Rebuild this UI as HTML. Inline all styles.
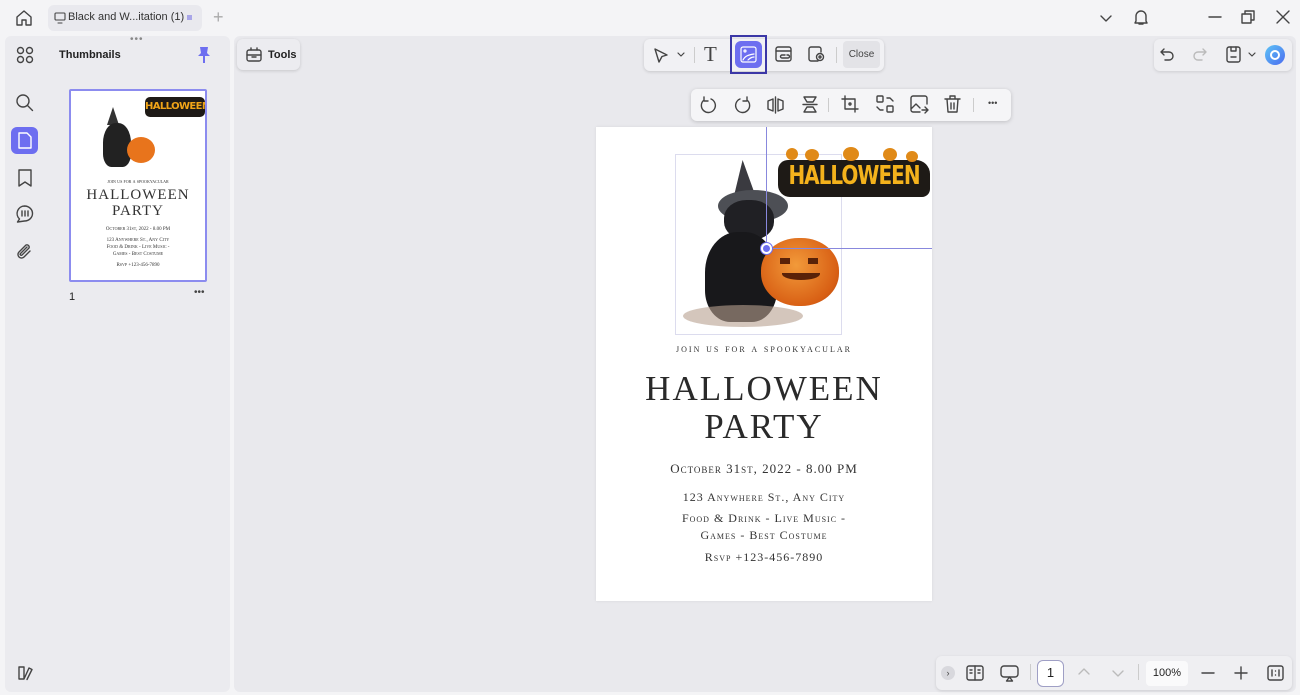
<!DOCTYPE html>
<html><head><meta charset="utf-8"><style>
*{box-sizing:border-box;margin:0;padding:0}
body{width:1300px;height:695px;overflow:hidden;background:#f4f4f6;font-family:"Liberation Sans",sans-serif;position:relative;color:#222}
.a{position:absolute}
svg{position:absolute}
.ic{fill:none;stroke:#444;stroke-width:1.4;stroke-linecap:round;stroke-linejoin:round}
.serif{font-family:"Liberation Serif",serif;font-variant:small-caps;text-align:center;color:#333;position:absolute;white-space:nowrap}
</style></head><body>
<svg class="ic" style="left:14px;top:8px" width="20" height="20" viewBox="0 0 20 20"><path d="M3 9l7-6 7 6v8h-5v-5H8v5H3z"/></svg>
<div class="a" style="left:48px;top:5px;width:154px;height:26px;background:#e9e9ee;border-radius:6px"></div>
<svg class="ic" style="left:54px;top:12px;stroke-width:1.1" width="12" height="12" viewBox="0 0 12 12"><rect x="1" y="1" width="10" height="7" rx="1"/><path d="M4 11h4"/></svg>
<div class="a" style="left:68px;top:11px;font-size:11px;color:#333">Black and W...itation (1)</div>
<div class="a" style="left:187px;top:15px;width:5px;height:5px;background:#a9a6e8"></div>
<div class="a" style="left:213px;top:7px;font-size:18px;color:#aaa;font-weight:300">+</div>
<svg class="ic" style="left:1100px;top:12px" width="12" height="12"><path d="M1 4l5 5 5-5"/></svg>
<svg class="ic" style="left:1133px;top:9px" width="16" height="17"><path d="M3 12V7a5 5 0 0110 0v5l1 2H2zM6 15h4"/></svg>
<svg class="ic" style="left:1208px;top:10px" width="14" height="14"><path d="M1 7h12"/></svg>
<svg class="ic" style="left:1241px;top:10px" width="14" height="14"><rect x="1" y="4" width="9" height="9"/><path d="M4 4V1h9v9h-3"/></svg>
<svg class="ic" style="left:1276px;top:10px" width="14" height="14"><path d="M1 1l12 12M13 1L1 13"/></svg>
<div class="a" style="left:5px;top:36px;width:225px;height:656px;background:#ebebef;border-radius:6px"></div>
<svg class="ic" style="left:16px;top:46px" width="18" height="18"><circle cx="4.5" cy="4.5" r="3"/><circle cx="13.5" cy="4.5" r="3"/><circle cx="4.5" cy="13.5" r="3"/><circle cx="13.5" cy="13.5" r="3"/></svg>
<svg class="ic" style="left:15px;top:93px" width="19" height="19"><circle cx="8" cy="8" r="6"/><path d="M12.5 12.5l5 5"/></svg>
<div class="a" style="left:11px;top:127px;width:27px;height:27px;background:#6d6ef0;border-radius:6px"></div>
<svg class="ic" style="left:17px;top:132px;stroke:#fff" width="16" height="17"><path d="M2 1h8l4 4v11H2z"/></svg>
<svg class="ic" style="left:17px;top:169px" width="16" height="18"><path d="M2 1h12v16l-6-4-6 4z"/></svg>
<svg class="ic" style="left:15px;top:205px" width="19" height="18"><path d="M9.5 1a8 7.5 0 110 15l-7 1 2-3a7.5 7.5 0 015-13zM7 6v5M10 6v5M13 6v5"/></svg>
<svg class="ic" style="left:16px;top:242px" width="17" height="19"><path d="M14 9l-6 6a3.5 3.5 0 01-5-5l7-7a2.3 2.3 0 013 3l-7 7a1 1 0 01-1.5-1.5L11 5"/></svg>
<svg class="ic" style="left:17px;top:665px" width="16" height="16"><path d="M2 2h5v12H2zM7 14l5-11 3 1.5-5 10"/></svg>
<div class="a" style="left:130px;top:34px;font-size:10px;color:#888;letter-spacing:1px">•••</div>
<div class="a" style="left:59px;top:49px;font-size:11px;font-weight:bold;color:#222">Thumbnails</div>
<svg style="left:197px;top:46px" width="14" height="18"><path d="M3 1h8l-1 6 3 3H1l3-3z" fill="#6d6ef0"/><path d="M7 10v7" stroke="#6d6ef0" stroke-width="2"/></svg>
<div class="a" style="left:69px;top:89px;width:138px;height:193px;background:#fff;border:2px solid #8c8cef;border-radius:2px;overflow:hidden">
 <div class="a" style="left:74px;top:6px;width:60px;height:20px;background:#1e1a16;border-radius:5px;font-family:'DejaVu Sans',sans-serif;font-size:10px;font-weight:bold;color:#f0a418;text-align:center;line-height:20px;letter-spacing:-.6px">HALLOWEEN</div>
 <div class="a" style="left:36px;top:16px;width:12px;height:18px;background:#333;clip-path:polygon(50% 0,100% 100%,0 100%)"></div>
 <div class="a" style="left:32px;top:32px;width:28px;height:44px;background:#222;border-radius:45% 45% 30% 30%"></div>
 <div class="a" style="left:56px;top:46px;width:28px;height:26px;background:#e8741c;border-radius:50%"></div>
 <div class="serif" style="left:0;width:134px;top:88px;font-size:5px">join us for a spookyacular</div>
 <div class="serif" style="left:0;width:134px;top:96px;font-size:15px;line-height:16px;letter-spacing:1px">HALLOWEEN<br>PARTY</div>
 <div class="serif" style="left:0;width:134px;top:135px;font-size:5px">October 31st, 2022 - 8.00 PM</div>
 <div class="serif" style="left:0;width:134px;top:146px;font-size:5px;line-height:7px">123 Anywhere St., Any City<br>Food &amp; Drink - Live Music -<br>Games - Best Costume</div>
 <div class="serif" style="left:0;width:134px;top:171px;font-size:5px">Rsvp +123-456-7890</div>
</div>
<div class="a" style="left:69px;top:291px;font-size:11px">1</div>
<div class="a" style="left:194px;top:287px;font-size:10px;color:#444">•••</div>
<div class="a" style="left:234px;top:36px;width:1062px;height:656px;background:#e9e9ed;border-radius:6px"></div>
<div class="a" style="left:237px;top:39px;width:63px;height:31px;background:#ececf0;border-radius:6px;box-shadow:0 1px 3px rgba(0,0,0,.15)"></div>
<svg class="ic" style="left:245px;top:45px" width="18" height="18"><rect x="2" y="5" width="14" height="11" rx="2"/><path d="M6 5V3M12 5V3M2 10h14M7 12h4"/></svg>
<div class="a" style="left:268px;top:49px;font-size:11px;font-weight:bold">Tools</div>
<div class="a" style="left:644px;top:39px;width:240px;height:32px;background:#f1f1f4;border-radius:6px;box-shadow:0 1px 3px rgba(0,0,0,.15)"></div>
<svg class="ic" style="left:653px;top:47px" width="16" height="17"><path d="M2 2l12 6-5 1.5L6 15z"/></svg>
<svg class="ic" style="left:677px;top:52px;stroke-width:1.2" width="8" height="6"><path d="M1 1l3 3 3-3"/></svg>
<div class="a" style="left:694px;top:47px;width:1px;height:16px;background:#ccc"></div>
<div class="a" style="left:704px;top:42px;font-family:'Liberation Serif',serif;font-size:21px;color:#444">T</div>
<div class="a" style="left:730px;top:35px;width:37px;height:39px;border:2px solid #3b37a6"></div>
<div class="a" style="left:735px;top:41px;width:27px;height:27px;background:#6d6ef0;border-radius:6px"></div>
<svg class="ic" style="left:740px;top:46px;stroke:#fff;stroke-width:1.2" width="17" height="17"><rect x="1" y="1" width="15" height="15" rx="2"/><circle cx="5" cy="5" r="1"/><path d="M3 14c2-4 5-5 11-6M8 14c2-2 4-3 6-3"/></svg>
<svg class="ic" style="left:775px;top:46px" width="18" height="17"><rect x="1" y="1" width="15" height="14" rx="2"/><path d="M1 5h15M7 12h6a1.5 1.5 0 000-3h-1M10 9H7a1.5 1.5 0 000 3"/></svg>
<svg class="ic" style="left:808px;top:46px" width="18" height="17"><path d="M10 15H3a2 2 0 01-2-2V3a2 2 0 012-2h8a2 2 0 012 2v3"/><circle cx="12" cy="11" r="3.5"/><circle cx="12" cy="11" r="1"/></svg>
<div class="a" style="left:836px;top:47px;width:1px;height:16px;background:#ccc"></div>
<div class="a" style="left:843px;top:41px;width:37px;height:27px;background:#e3e3e7;border-radius:4px;font-size:10px;color:#444;text-align:center;line-height:27px">Close</div>
<div class="a" style="left:691px;top:89px;width:320px;height:32px;background:#f5f5f7;border-radius:6px;box-shadow:0 1px 4px rgba(0,0,0,.18)"></div>
<svg class="ic" style="left:699px;top:96px" width="18" height="18"><path d="M5 4a7 7 0 107-1M5 1v4h4"/></svg>
<svg class="ic" style="left:734px;top:96px" width="18" height="18"><path d="M13 4a7 7 0 11-7-1M13 1v4H9"/></svg>
<svg class="ic" style="left:766px;top:96px" width="19" height="18"><path d="M9.5 1v16M7 3L2 5v8l5 2zM12 3l5 2v8l-5 2z"/></svg>
<svg class="ic" style="left:801px;top:95px" width="18" height="19"><path d="M2 9.5h14M3 2h12l-3 5H6zM6 12h6l3 5H3z"/></svg>
<div class="a" style="left:828px;top:98px;width:1px;height:14px;background:#ccc"></div>
<svg class="ic" style="left:841px;top:95px" width="19" height="19"><path d="M4 1v13h13M1 4h13v13"/><circle cx="9" cy="9" r="1"/></svg>
<svg class="ic" style="left:876px;top:95px" width="18" height="19"><rect x="1" y="1" width="6" height="6" rx="1"/><rect x="11" y="11" width="6" height="6" rx="1"/><path d="M11 3h3l3 3M7 15H4l-3-3"/></svg>
<svg class="ic" style="left:910px;top:95px" width="19" height="19"><path d="M10 17H3a2 2 0 01-2-2V3a2 2 0 012-2h12a2 2 0 012 2v6M1 14l5-5 4 4M12 15h6M15 12l3 3-3 3"/></svg>
<svg class="ic" style="left:944px;top:95px" width="17" height="19"><path d="M1 4h15M6 4V1h5v3M3 4l1 13h9l1-13M7 8v6M10 8v6"/></svg>
<div class="a" style="left:973px;top:98px;width:1px;height:14px;background:#ccc"></div>
<div class="a" style="left:988px;top:98px;font-size:9px;color:#444">•••</div>
<div class="a" style="left:1154px;top:39px;width:138px;height:32px;background:#efeff2;border-radius:6px;box-shadow:0 1px 3px rgba(0,0,0,.12)"></div>
<svg class="ic" style="left:1160px;top:48px" width="15" height="13"><path d="M4 1L1 4l3 3M1 4h8a4 4 0 010 8H5"/></svg>
<svg class="ic" style="left:1192px;top:48px;stroke:#bbb" width="15" height="13"><path d="M11 1l3 3-3 3M14 4H6a4 4 0 000 8h4"/></svg>
<svg class="ic" style="left:1226px;top:46px" width="15" height="17"><rect x="1" y="1" width="13" height="15" rx="2"/><path d="M5 1v4h5V1M5 11h5"/></svg>
<svg class="ic" style="left:1248px;top:52px;stroke-width:1.2" width="8" height="6"><path d="M1 1l3 3 3-3"/></svg>
<div class="a" style="left:1265px;top:45px;width:20px;height:20px;border-radius:50%;background:linear-gradient(135deg,#5cc3f5,#4c6cf0)"></div>
<div class="a" style="left:1270px;top:50px;width:10px;height:10px;border-radius:50%;border:2px solid #fff"></div>
<div class="a" style="left:596px;top:127px;width:336px;height:474px;background:#fff;box-shadow:0 0 3px rgba(0,0,0,.08)"></div>
<div class="a" style="left:675px;top:154px;width:167px;height:181px;border:1px solid #dcdcee"></div>
<div class="a" style="left:778px;top:160px;width:152px;height:37px;background:#1e1a16;border-radius:10px 14px 8px 12px"></div>
<div class="a" style="left:786px;top:148px;width:12px;height:12px;border-radius:50%;background:#e08a18"></div>
<div class="a" style="left:805px;top:149px;width:14px;height:12px;border-radius:50%;background:#e08a18"></div>
<div class="a" style="left:843px;top:147px;width:16px;height:14px;border-radius:50%;background:#e08a18"></div>
<div class="a" style="left:883px;top:148px;width:14px;height:13px;border-radius:50%;background:#e08a18"></div>
<div class="a" style="left:906px;top:151px;width:12px;height:11px;border-radius:50%;background:#e08a18"></div>
<div class="a" style="left:778px;top:163px;width:152px;font-family:'DejaVu Sans',sans-serif;font-weight:bold;font-size:20px;line-height:24px;letter-spacing:-1px;color:#f4b21c;text-align:center;transform:scaleY(1.3)">HALLOWEEN</div>
<div class="a" style="left:733px;top:160px;width:24px;height:40px;background:#3a3a40;clip-path:polygon(40% 0,100% 100%,0 100%)"></div>
<div class="a" style="left:718px;top:190px;width:70px;height:32px;background:#4d4f55;border-radius:50%"></div>
<div class="a" style="left:724px;top:200px;width:50px;height:40px;background:#202024;border-radius:45%"></div>
<div class="a" style="left:705px;top:232px;width:72px;height:90px;background:#18181b;border-radius:45% 45% 35% 35%"></div>
<div class="a" style="left:683px;top:305px;width:120px;height:22px;background:#b8a090;border-radius:50%;opacity:.6"></div>
<div class="a" style="left:761px;top:238px;width:78px;height:68px;background:radial-gradient(circle at 45% 40%,#f29a3a,#d85f14 70%,#a8400c);border-radius:48%"></div>
<div class="a" style="left:782px;top:268px;width:38px;height:12px;border-bottom:7px solid #5a2208;border-radius:0 0 50% 50%"></div>
<div class="a" style="left:780px;top:258px;width:10px;height:6px;background:#5a2208"></div>
<div class="a" style="left:808px;top:258px;width:10px;height:6px;background:#5a2208"></div>
<div class="a" style="left:766px;top:127px;width:1px;height:122px;background:#8888dd"></div>
<div class="a" style="left:767px;top:248px;width:165px;height:1px;background:#8888dd"></div>
<div class="a" style="left:761px;top:243px;width:11px;height:11px;border-radius:50%;background:#6d6ef0;border:2px solid #fff;box-shadow:0 0 0 1px #6d6ef0"></div>
<div class="serif" style="left:596px;width:336px;top:343px;font-size:11px;letter-spacing:2px">join us for a spookyacular</div>
<div class="serif" style="left:596px;width:336px;top:370px;font-size:35px;line-height:38px;letter-spacing:2px;font-variant:normal;color:#2a2a2a">HALLOWEEN<br>PARTY</div>
<div class="serif" style="left:596px;width:336px;top:461px;font-size:13px;letter-spacing:1px">October 31st, 2022 - 8.00 PM</div>
<div class="serif" style="left:596px;width:336px;top:489px;font-size:12px;letter-spacing:1px;line-height:17px">123 Anywhere St., Any City</div>
<div class="serif" style="left:596px;width:336px;top:510px;font-size:12px;letter-spacing:1px;line-height:17px">Food &amp; Drink - Live Music -<br>Games - Best Costume</div>
<div class="serif" style="left:596px;width:336px;top:550px;font-size:12px;letter-spacing:1px">Rsvp +123-456-7890</div>
<div class="a" style="left:936px;top:656px;width:356px;height:34px;background:#efeff2;border-radius:6px;box-shadow:0 1px 3px rgba(0,0,0,.12)"></div>
<div class="a" style="left:941px;top:666px;width:14px;height:14px;border-radius:50%;background:#d8d8dd;font-size:9px;text-align:center;line-height:14px;color:#444">›</div>
<svg class="ic" style="left:966px;top:665px" width="18" height="16"><rect x="1" y="1" width="16" height="14" rx="2"/><path d="M9 1v14M4 5h2M4 8h2M12 5h2M12 8h2"/></svg>
<svg class="ic" style="left:1000px;top:665px" width="19" height="17"><rect x="1" y="1" width="17" height="11" rx="3"/><path d="M9.5 12l-3 4h6z"/></svg>
<div class="a" style="left:1030px;top:664px;width:1px;height:16px;background:#ccc"></div>
<div class="a" style="left:1037px;top:660px;width:27px;height:27px;border:1.5px solid #9f9fc5;border-radius:6px;background:#fff;font-size:13px;text-align:center;line-height:24px">1</div>
<svg class="ic" style="left:1078px;top:668px;stroke:#bbb" width="12" height="8"><path d="M1 6l5-5 5 5"/></svg>
<svg class="ic" style="left:1112px;top:670px;stroke:#bbb" width="12" height="8"><path d="M1 1l5 5 5-5"/></svg>
<div class="a" style="left:1138px;top:664px;width:1px;height:16px;background:#ccc"></div>
<div class="a" style="left:1146px;top:661px;width:42px;height:25px;background:#fafafb;border-radius:4px;font-size:11px;text-align:center;line-height:25px">100%</div>
<svg class="ic" style="left:1201px;top:666px" width="14" height="14"><path d="M1 7h12"/></svg>
<svg class="ic" style="left:1234px;top:666px" width="14" height="14"><path d="M1 7h12M7 1v12"/></svg>
<svg class="ic" style="left:1267px;top:665px" width="17" height="16"><rect x="1" y="1" width="15" height="14" rx="2"/><path d="M5 5v6M12 5v6M8.5 6v.1M8.5 10v.1"/></svg>
</body></html>
